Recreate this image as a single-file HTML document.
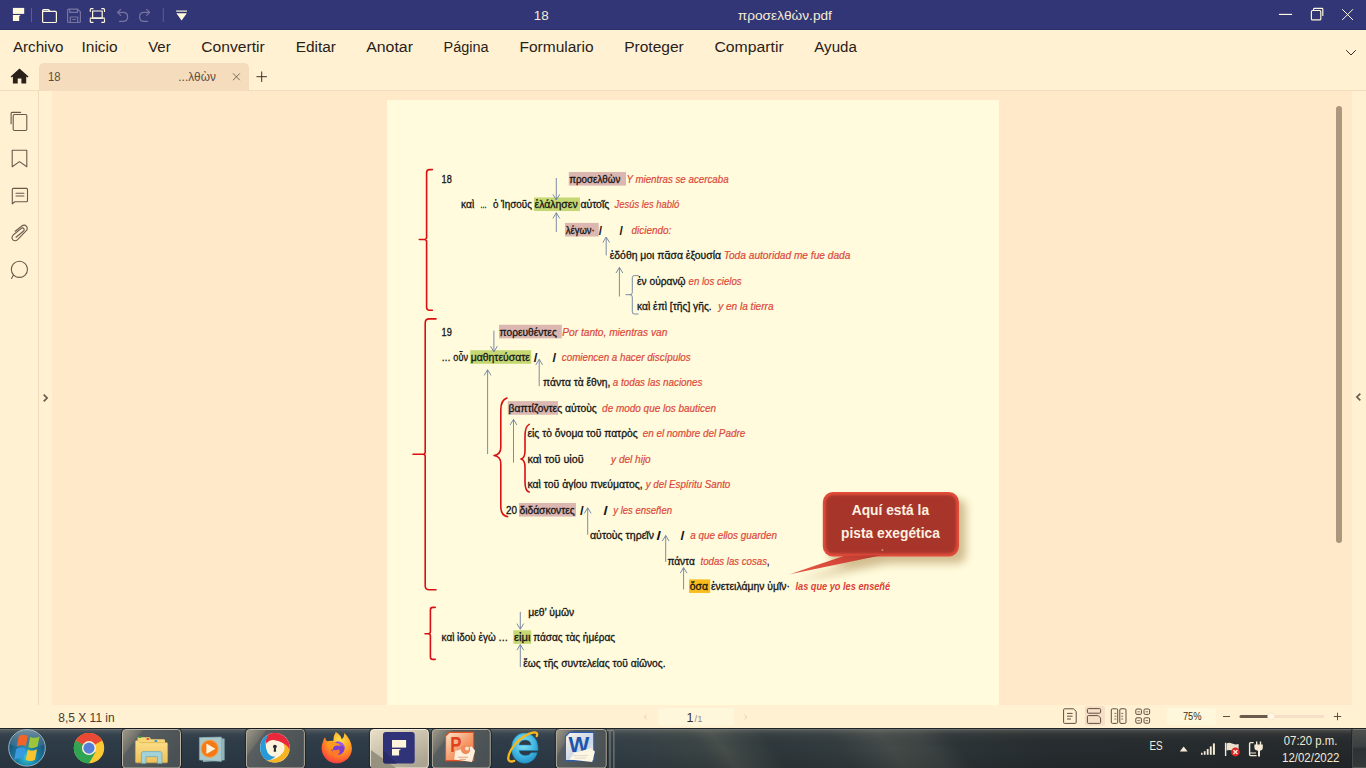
<!DOCTYPE html>
<html lang="es">
<head>
<meta charset="utf-8">
<title>προσελθὼν.pdf</title>
<style>
html,body{margin:0;padding:0;}
body{width:1366px;height:768px;overflow:hidden;position:relative;background:#fff1d2;font-family:"Liberation Sans",sans-serif;}
div{position:absolute;box-sizing:border-box;}
svg{position:absolute;left:0;top:0;overflow:visible;}
svg text{font-family:"Liberation Sans",sans-serif;}
#titlebar{left:0;top:0;width:1366px;height:30px;background:#333676;border-bottom:1px solid #2c2f6c;}
#menubar{left:0;top:30px;width:1366px;height:32px;background:#fff1d2;}
#tabbar{left:0;top:62px;width:1366px;height:29px;background:#fff1d2;border-bottom:1px solid #f4dcc0;}
#tab{left:39px;top:1px;width:210px;height:28px;background:#f5dcbc;border-radius:5px 5px 0 0;}
#sidebar{left:0;top:91px;width:39px;height:614px;background:#fff1d2;border-right:1px solid #f1d9bd;}
#gutter{left:39px;top:91px;width:13px;height:614px;background:#fff1d2;}
#viewport{left:52px;top:91px;width:1300px;height:614px;background:#ffe9c9;}
#page{left:335px;top:9px;width:612px;height:605px;background:#fffbdc;}
#rgutter{left:1352px;top:91px;width:14px;height:614px;background:#fff1d2;}
#vthumb{left:1336px;top:106px;width:6px;height:437px;background:#ab977e;border-radius:3px;}
#statusbar{left:0;top:705px;width:1366px;height:23px;background:#fff1d2;}
#taskbar{left:0;top:728px;width:1366px;height:40px;background:#2f3b44;}
.ui{fill:#2a2119;font-size:14.67px;}
.tt{fill:#f6edd2;font-size:13.6px;}
.tb{fill:#5c4c3e;font-size:12px;}
.st{fill:#4a3c30;font-size:12px;}
.k{fill:#161616;font-size:10px;stroke:#161616;stroke-width:0.3px;}
.r{fill:#dc4a3c;font-size:10px;font-style:italic;stroke:#dc4a3c;stroke-width:0.2px;}
.rb{fill:#dc4034;font-size:10px;font-style:italic;font-weight:bold;}
.sl{fill:#161616;font-size:13px;font-weight:bold;}
.co{fill:#fdf1e0;font-size:14.4px;font-weight:bold;}
.clk{fill:#f4ead6;font-size:12px;}
</style>
</head>
<body>
<div id="titlebar"></div>
<div id="menubar"></div>
<div id="tabbar"><div id="tab"></div></div>
<div id="sidebar"></div>
<div id="gutter"></div>
<div id="viewport"><div id="page"></div></div>
<div id="rgutter"></div>
<div id="vthumb"></div>
<div id="statusbar"></div>
<div id="taskbar"></div>
<svg class="chrome" width="1366" height="768" viewBox="0 0 1366 768">
<!-- title bar icons -->
<g fill="#fffadc">
<rect x="12.9" y="7.9" width="11.3" height="6"/>
<path d="M12.9 15.1H20.7L19.2 16.2V21.1H12.9Z"/>
</g>
<path d="M31.5 8V22M163.3 8V22" stroke="#5f5d8a" stroke-width="1"/>
<g fill="none" stroke="#fffadc" stroke-width="1.2" stroke-linejoin="round" stroke-linecap="round">
<path d="M42.6 11.4V10.6Q42.6 9.6 43.6 9.6H48Q48.8 9.6 49.3 10.4L49.9 11.4H55.4Q56.4 11.4 56.4 12.4V21.5Q56.4 22.5 55.4 22.5H43.6Q42.6 22.5 42.6 21.5V11.4H49.9"/>
<!-- scan -->
<path d="M90.3 11.5V9.7Q90.3 8.7 91.3 8.7H93M101.8 8.7H103.5Q104.5 8.7 104.5 9.7V11.5M104.5 19.5V21.4Q104.5 22.4 103.5 22.4H101.8M93 22.4H91.3Q90.3 22.4 90.3 21.4V19.5"/>
<rect x="92.6" y="11" width="9.6" height="7.2"/>
<path d="M90.3 18.2H104.5"/>
</g>
<g fill="none" stroke="#77759f" stroke-width="1.2" stroke-linejoin="round" stroke-linecap="round">
<!-- save -->
<path d="M67.6 10.2Q67.6 9.2 68.6 9.2H77.6L80.4 12V21.5Q80.4 22.5 79.4 22.5H68.6Q67.6 22.5 67.6 21.5Z"/>
<path d="M69.8 9.4V12.4H77.4V9.4M70.3 22.3V17H77.7V22.3M72.7 19.5H75.3"/>
<!-- undo -->
<path d="M117.6 12.3H123.2Q127.6 12.3 127.6 16.8Q127.6 21.4 123.2 21.4H119.6M120.6 9.3L117.6 12.3L120.6 15.3"/>
<!-- redo -->
<path d="M149.6 12.3H144Q139.6 12.3 139.6 16.8Q139.6 21.4 144 21.4H147.6M146.6 9.3L149.6 12.3L146.6 15.3"/>
</g>
<g fill="#fffadc"><rect x="176.2" y="10.5" width="10.8" height="1.2"/><path d="M176.4 13.3H186.8L181.6 20.6Z"/></g>
<text class="tt" x="533.7" y="19.9" textLength="14.9" lengthAdjust="spacingAndGlyphs">18</text>
<text class="tt" x="737.8" y="19.9" textLength="94.1" lengthAdjust="spacingAndGlyphs">προσελθὼν.pdf</text>
<g fill="none" stroke="#fffadc" stroke-width="1.15">
<path d="M1278.9 14.4H1292.1"/>
<rect x="1311.4" y="10.5" width="9.4" height="9.4" rx="1"/>
<path d="M1313.6 10.2V9.2Q1313.6 8.4 1314.4 8.4H1322Q1322.8 8.4 1322.8 9.2V16"/>
<path d="M1342.2 9.2L1353 20M1353 9.2L1342.2 20" stroke-width="1"/>
</g>
<!-- menu -->
<text class="ui" x="12.9" y="51.9" textLength="50.6" lengthAdjust="spacingAndGlyphs">Archivo</text>
<text class="ui" x="81.5" y="51.9" textLength="36.1" lengthAdjust="spacingAndGlyphs">Inicio</text>
<text class="ui" x="148.2" y="51.9" textLength="22.5" lengthAdjust="spacingAndGlyphs">Ver</text>
<text class="ui" x="201.3" y="51.9" textLength="63.5" lengthAdjust="spacingAndGlyphs">Convertir</text>
<text class="ui" x="295.7" y="51.9" textLength="40.3" lengthAdjust="spacingAndGlyphs">Editar</text>
<text class="ui" x="366.2" y="51.9" textLength="46.8" lengthAdjust="spacingAndGlyphs">Anotar</text>
<text class="ui" x="443.5" y="51.9" textLength="45.1" lengthAdjust="spacingAndGlyphs">Página</text>
<text class="ui" x="519.5" y="51.9" textLength="74.1" lengthAdjust="spacingAndGlyphs">Formulario</text>
<text class="ui" x="624.2" y="51.9" textLength="59.6" lengthAdjust="spacingAndGlyphs">Proteger</text>
<text class="ui" x="714.4" y="51.9" textLength="69.3" lengthAdjust="spacingAndGlyphs">Compartir</text>
<text class="ui" x="814.3" y="51.9" textLength="42.5" lengthAdjust="spacingAndGlyphs">Ayuda</text>
<path d="M1346.2 50.2L1351 55L1355.8 50.2" fill="none" stroke="#3a2f26" stroke-width="1"/>
<!-- tab bar -->
<path d="M10.6 76.6L19.5 68.4L28.5 76.6L27.6 77.6L26.2 76.4V83.6H21.4V78.6H17.7V83.6H12.9V76.4L11.5 77.6Z" fill="#2a211a"/>
<text class="tb" x="47.9" y="80.9" textLength="12.5" lengthAdjust="spacingAndGlyphs">18</text>
<text class="tb" x="178.3" y="80.9" textLength="37.6" lengthAdjust="spacingAndGlyphs">...λθὼν</text>
<path d="M233 73.4L239.8 80.2M239.8 73.4L233 80.2" stroke="#6a5a4c" stroke-width="0.9" fill="none"/>
<path d="M256.5 76.7H266.9M261.7 71.5V81.9" stroke="#3a2f26" stroke-width="1" fill="none"/>
<!-- sidebar icons -->
<g fill="none" stroke="#6b5a4c" stroke-width="1.1" stroke-linejoin="round" stroke-linecap="round">
<rect x="13.2" y="114.5" width="13.6" height="16" rx="1.2"/>
<path d="M11.1 123.8V113.4Q11.1 112.4 12.1 112.4H20.6"/>
<path d="M12.2 150.3H26.8V166.8L19.5 161.6L12.2 166.8Z"/>
<path d="M12.3 203.8V189.4Q12.3 188.4 13.3 188.4H26.5Q27.5 188.4 27.5 189.4V200.8Q27.5 201.8 26.5 201.8H14.9Z"/>
<path d="M16 193.2H23.9M16 196H23.9"/>
<path d="M15.2 231.2L21.6 226.2Q24.4 224 26.5 226.4Q28.4 229 25.8 231.2L17.6 239.6Q15.2 241.8 12.9 239.8Q10.8 237.4 13.4 234.8L21.4 228.4Q22.8 227.4 23.9 228.6Q24.8 230 23.6 231L16 237.2"/>
<circle cx="19.4" cy="269.3" r="8.1"/>
<path d="M13.4 275L11.6 278.4"/>
</g>
<path d="M43.7 394.6L47.1 398L43.7 401.4" fill="none" stroke="#6b5a4a" stroke-width="1.7"/>
<path d="M1360.3 393.6L1356.9 397L1360.3 400.4" fill="none" stroke="#6b5a4a" stroke-width="1.7"/>
<!-- status bar -->
<text class="st" x="58.3" y="721.6" textLength="56.4" lengthAdjust="spacingAndGlyphs">8,5 X 11 in</text>
<path d="M646.8 714.8L644.2 717L646.8 719.2M744.4 714.8L747 717L744.4 719.2" fill="none" stroke="#e6cfc0" stroke-width="1"/>
<rect x="658.3" y="708.2" width="75.7" height="17.5" rx="3" fill="#fff7dc"/>
<text x="686.6" y="721.8" font-size="12.5" fill="#3a2f26">1</text>
<text x="694.6" y="721.8" font-size="9.5" fill="#9a8c80">/1</text>
<rect x="1084.9" y="706" width="20" height="19.7" rx="2" fill="#f7dec6"/>
<g fill="none" stroke="#5e4e42" stroke-width="1" stroke-linejoin="round">
<path d="M1063.6 709.8Q1063.6 708.8 1064.6 708.8H1073.4L1076.2 711.4V722.4Q1076.2 723.4 1075.2 723.4H1064.6Q1063.6 723.4 1063.6 722.4Z"/>
<path d="M1067 713.4H1072.6M1067 716.2H1072.6M1067 719H1071"/>
<rect x="1087.4" y="708.6" width="13.2" height="4.6" rx="1"/>
<path d="M1087.4 716.6Q1087.4 715.6 1088.4 715.6H1098.2L1100.6 718V722.4Q1100.6 723.4 1099.6 723.4H1088.4Q1087.4 723.4 1087.4 722.4Z"/>
<rect x="1111.3" y="708.8" width="6.4" height="14.6" rx="1.2"/>
<rect x="1119.8" y="708.8" width="6.2" height="14.6" rx="1.2"/>
<path d="M1114.4 713.4H1116.4M1114.4 716.2H1116.4M1114.4 719H1116.4M1121.2 713.4H1123.2M1121.2 716.2H1123.2M1121.2 719H1123.2" stroke-width="0.8"/>
<rect x="1135.8" y="709" width="5.6" height="5.4" rx="1.2"/><rect x="1144" y="709" width="5.6" height="5.4" rx="1.2"/>
<rect x="1135.8" y="717.8" width="5.6" height="5.4" rx="1.2"/><rect x="1144" y="717.8" width="5.6" height="5.4" rx="1.2"/>
<path d="M1137.4 711.8H1139.8M1145.6 711.8H1148M1137.4 720.6H1139.8M1145.6 720.6H1148" stroke-width="0.8"/>
</g>
<rect x="1166.8" y="708" width="49.4" height="17" rx="3" fill="#fff7dc"/>
<text x="1182.9" y="720.2" font-size="11" fill="#3a2f26" textLength="18.6" lengthAdjust="spacingAndGlyphs">75%</text>
<path d="M1223 716.5H1230M1333.8 716.5H1341.2M1337.5 712.8V720.2" stroke="#5e4e42" stroke-width="1" fill="none"/>
<path d="M1241 716.5H1323" stroke="#f7dec6" stroke-width="3" stroke-linecap="round"/>
<path d="M1241 716.5H1268" stroke="#6b5a4c" stroke-width="3" stroke-linecap="round"/>
<circle cx="1271.2" cy="716.5" r="3.6" fill="#fff8e2" stroke="#f3dcc2" stroke-width="0.6"/>
</svg>

<svg class="task" width="1366" height="768" viewBox="0 0 1366 768">
<defs>
<linearGradient id="tbh" gradientUnits="userSpaceOnUse" x1="0" y1="0" x2="1366" y2="0" gradientTransform="translate(-561 0) skewX(36.87)"><stop offset="0.0000" stop-color="#2d3b47"/><stop offset="0.4100" stop-color="#2e3c48"/><stop offset="0.4685" stop-color="#343f45"/><stop offset="0.5124" stop-color="#3a4444"/><stop offset="0.5286" stop-color="#464d4a"/><stop offset="0.5454" stop-color="#3a4343"/><stop offset="0.5673" stop-color="#2e373b"/><stop offset="0.6149" stop-color="#323b3e"/><stop offset="0.6515" stop-color="#444a48"/><stop offset="0.6808" stop-color="#3b4241"/><stop offset="0.7028" stop-color="#2c3336"/><stop offset="0.7687" stop-color="#262c2f"/><stop offset="1.0000" stop-color="#25292c"/></linearGradient>
<linearGradient id="tbg" x1="0" y1="0" x2="0" y2="1"><stop offset="0" stop-color="#fff2d8" stop-opacity="0.22"/><stop offset="0.15" stop-color="#fff2d8" stop-opacity="0.05"/><stop offset="0.5" stop-color="#000" stop-opacity="0"/><stop offset="1" stop-color="#000" stop-opacity="0.12"/></linearGradient>
<linearGradient id="sdg" x1="0" y1="0" x2="0" y2="1"><stop offset="0" stop-color="#4c504e"/><stop offset="0.45" stop-color="#3a3f40"/><stop offset="0.5" stop-color="#2c3133"/><stop offset="1" stop-color="#34393a"/></linearGradient>
<linearGradient id="btn" x1="0" y1="0" x2="1" y2="0.5"><stop offset="0" stop-color="#a09a8a"/><stop offset="0.26" stop-color="#6f706a"/><stop offset="0.30" stop-color="#585e5f"/><stop offset="1" stop-color="#4a5154"/></linearGradient>
<linearGradient id="btna" x1="0" y1="0" x2="0.7" y2="1"><stop offset="0" stop-color="#eae0c8"/><stop offset="0.5" stop-color="#cac2ac"/><stop offset="1" stop-color="#aaa492"/></linearGradient>
<radialGradient id="orb" cx="0.5" cy="0.75" r="0.75"><stop offset="0" stop-color="#30d0e0"/><stop offset="0.4" stop-color="#1a7aa0"/><stop offset="0.8" stop-color="#1c4f74"/><stop offset="1" stop-color="#234a66"/></radialGradient>
<linearGradient id="orbhi" x1="0" y1="0" x2="0" y2="1"><stop offset="0" stop-color="#d8e4e0" stop-opacity="0.85"/><stop offset="1" stop-color="#7aa8b8" stop-opacity="0.25"/></linearGradient>
<radialGradient id="ffg" cx="0.6" cy="0.25" r="0.9"><stop offset="0" stop-color="#ffe14a"/><stop offset="0.45" stop-color="#ff9a1f"/><stop offset="0.8" stop-color="#ff4a3a"/><stop offset="1" stop-color="#e82e6a"/></radialGradient>
<radialGradient id="ieg" cx="0.45" cy="0.35" r="0.8"><stop offset="0" stop-color="#8ee6f4"/><stop offset="0.55" stop-color="#3db4e0"/><stop offset="1" stop-color="#1a80b8"/></radialGradient>
<linearGradient id="fold" x1="0" y1="0" x2="0" y2="1"><stop offset="0" stop-color="#fbe08a"/><stop offset="1" stop-color="#f0c058"/></linearGradient>
<linearGradient id="ppt" x1="0" y1="0" x2="1" y2="1"><stop offset="0" stop-color="#fde8d0"/><stop offset="0.5" stop-color="#f6a070"/><stop offset="1" stop-color="#ee6a3a"/></linearGradient>
<linearGradient id="wrd" x1="0" y1="0" x2="1" y2="1"><stop offset="0" stop-color="#fdf8e6"/><stop offset="0.6" stop-color="#c8d4e8"/><stop offset="1" stop-color="#fdf6e0"/></linearGradient>
</defs>
<rect x="0" y="728" width="1366" height="40" fill="url(#tbh)"/>
<rect x="0" y="728" width="1366" height="40" fill="url(#tbg)"/>
<rect x="0" y="728" width="1366" height="1" fill="#1e2428"/>
<rect x="0" y="729" width="1366" height="1" fill="#6e726e" opacity="0.8"/>
<!-- buttons -->
<g stroke="#b9b2a0" stroke-width="1">
<rect x="122.5" y="729.5" width="58" height="38.5" rx="3" fill="url(#btn)"/>
<rect x="246.4" y="729.5" width="58" height="38.5" rx="3" fill="url(#btn)"/>
<rect x="370.4" y="729.5" width="58" height="38.5" rx="3" fill="url(#btna)" stroke="#f4ecd6"/>
<path d="M370.9 750V768H396Z" fill="#96927f" stroke="none"/>
<rect x="432.3" y="729.5" width="58" height="38.5" rx="3" fill="url(#btn)"/>
<path d="M606 730.5H608.5Q610 730.5 610 732V768M610 730.5H612.4Q613.9 730.5 613.9 732V768" fill="none" stroke="#8a8a80"/>
<rect x="556.3" y="729.5" width="50" height="38.5" rx="3" fill="url(#btn)"/>
</g>
<g stroke="#14181c" stroke-width="1" fill="none" opacity="0.7">
<rect x="121.5" y="728.5" width="60" height="40.5" rx="4"/><rect x="245.4" y="728.5" width="60" height="40.5" rx="4"/><rect x="369.4" y="728.5" width="60" height="40.5" rx="4"/><rect x="431.3" y="728.5" width="60" height="40.5" rx="4"/><rect x="555.3" y="728.5" width="52" height="40.5" rx="4"/>
</g>
<!-- start orb -->
<circle cx="27" cy="747.8" r="18.3" fill="url(#orb)" stroke="#9ab4c0" stroke-width="1"/>
<path d="M9.8 744.5A17.4 17.4 0 0 1 44.2 744.5Q27 752 9.8 744.5Z" fill="url(#orbhi)" opacity="0.55"/>
<g transform="translate(27.8 747.9) scale(1.28) translate(-26.6 -747.8)">
<path d="M19.6 738.6Q23 736.6 26.6 738.4L25.2 746.4Q21.6 744.8 18 746.8Z" fill="#f0632a"/>
<path d="M28.4 739Q32 741 35.8 738.8L34.2 746.8Q30.6 749 27 747Z" fill="#9cc53c"/>
<path d="M17.6 748.6Q21.2 746.6 24.8 748.4L23.2 756.6Q19.8 754.8 16 757Z" fill="#3a9ae0"/>
<path d="M26.6 749Q30.2 751 33.8 748.8L32.2 757Q28.6 759 25 757Z" fill="#fcc42c"/>
</g>
<!-- chrome -->
<g transform="translate(89 748.1)">
<circle r="15.2" fill="#fbc934"/>
<path d="M0 0L-13.16 -7.6A15.2 15.2 0 0 1 13.16 -7.6Z" fill="#ea4a35"/>
<path d="M-13.16 -7.6A15.2 15.2 0 0 1 13.16 -7.6H0Z" fill="#ea4a35"/>
<path d="M-13.16 -7.6A15.2 15.2 0 0 0 0 15.2L6.58 3.8L-6.58 3.8Z" fill="#2fa452"/>
<path d="M-13.16 -7.6L-6.58 3.8L0 15.2A15.2 15.2 0 0 1 -13.16 -7.6Z" fill="#2fa452"/>
<path d="M-13.16 -7.6L0 0L-6.58 3.8Z" fill="#2fa452"/>
<path d="M-13.16 -7.6H6L0 0Z" fill="#ea4a35"/>
<circle r="7" fill="#fdf3dc"/><circle r="5.6" fill="#557fd8"/>
</g>
<!-- explorer -->
<g>
<path d="M137.6 737.2H149.6L151 739.2H163.6Q165 739.2 165 740.6V744H137.6Z" fill="#f7d878"/>
<path d="M140 742.6H166.4Q167.6 742.6 167.6 743.8V761.6Q167.6 762.8 166.4 762.8H136.6Q135.4 762.8 135.4 761.6V741.8Q135.4 740.6 136.6 740.6H138Z" fill="url(#fold)" stroke="#d8a840" stroke-width="0.6"/>
<rect x="138.6" y="736.4" width="2.6" height="1.6" fill="#28a83a"/><rect x="146.6" y="738.2" width="2.6" height="1.6" fill="#e03a2a"/><rect x="154.6" y="740.2" width="2.6" height="1.6" fill="#2a8ae0"/>
<path d="M141.4 763.4V753.6Q141.4 751.6 143.4 751.6H160Q162 751.6 162 753.6V763.4H157.4V756.6H146V763.4Z" fill="#9fd4e0" stroke="#5aa6be" stroke-width="0.7" opacity="0.95"/>
</g>
<!-- wmp -->
<g>
<path d="M203 737.4L224.6 738.4V760.2L203 762Z" fill="#8fb4bc"/>
<path d="M199.4 737.6L221.4 737V761.4L199.4 760Z" fill="#a9c8ca" stroke="#86a8b0" stroke-width="0.6"/>
<circle cx="209.7" cy="748.8" r="8.5" fill="#f57a16"/>
<circle cx="209.7" cy="748.8" r="8.5" fill="none" stroke="#fb9a3a" stroke-width="1"/>
<path d="M206.4 743.6L215.4 748.8L206.4 754Z" fill="#fdf2dc"/>
</g>
<!-- avast -->
<g transform="translate(274.9 747.8)">
<circle r="14.8" fill="#fdf3dc"/>
<path d="M-6.5 -13.3A14.8 14.8 0 0 1 14.6 2.4Q10 -6.4 -1 -7.8Q-6.4 -8 -8.6 -4Q-10 -9.6 -6.5 -13.3Z" fill="#e9283c"/>
<path d="M14.6 2.4A14.8 14.8 0 0 1 -8 12.4Q2 12.6 8.4 4.4Q11 0 8.2 -4.2Q13.4 -2.2 14.6 2.4Z" fill="#f7b322"/>
<path d="M-8 12.4A14.8 14.8 0 0 1 -6.5 -13.3Q-11.6 -5 -7.4 4.6Q-4.6 9 0.6 8.8Q-3 12.6 -8 12.4Z" fill="#279bd9"/>
<circle cx="0" cy="-1.2" r="1.9" fill="#2a2a2e"/><path d="M-0.9 -0.6H0.9L1.2 4H-1.2Z" fill="#2a2a2e"/>
</g>
<!-- firefox -->
<g transform="translate(336.8 748.6)">
<path d="M-1 -16.5Q4 -14 5 -9Q8 -12 7.4 -15.8Q14.6 -9 15.2 0A15.2 15.2 0 1 1 -14 -6.4Q-13.6 -9.6 -11.8 -11.4Q-11.4 -8.6 -9.6 -7.4Q-6.6 -8.4 -3.4 -7.6Q-3.6 -12.6 -1 -16.5Z" fill="url(#ffg)"/>
<circle cx="1" cy="-0.4" r="6.8" fill="#7b3fd4"/>
<path d="M1 -7.2A6.8 6.8 0 0 1 7.8 -0.4Q6 -4 1 -4.4Z" fill="#9a5af0"/>
<path d="M-10.6 -4.4Q-6.4 -8 -1.4 -6.4Q2.6 -5 4.6 -2Q1 -3.6 -2 -2.6Q-4.4 -1.2 -3.8 1.2Q-8 0.4 -10.6 -4.4Z" fill="#ff9a1c"/>
<path d="M-3.8 1.2Q-1 2.4 2.4 0.6Q4 4.4 0.4 6.6Q-4 7.4 -6.4 4Q-4.4 3.6 -3.8 1.2Z" fill="#ff7a28"/>
</g>
<!-- pdfelement -->
<g>
<rect x="383" y="731.9" width="31.7" height="31.7" rx="3" fill="#303378"/>
<path d="M383 750L396.6 763.6H386Q383 763.6 383 760.6Z" fill="#282b68"/>
<rect x="392" y="740" width="14.1" height="7.6" fill="#fff6dc"/>
<path d="M392 749H401L399.1 750.6V755.6H392Z" fill="#fff6dc"/>
</g>
<!-- powerpoint -->
<g>
<path d="M449.4 732.4H473.6V760.6H445.6V736.2Z" fill="url(#ppt)" stroke="#e8501e" stroke-width="1.1"/>
<text x="450.2" y="752.4" font-size="22" font-weight="bold" fill="#e2411a" textLength="11.2" lengthAdjust="spacingAndGlyphs">P</text>
<path d="M455 752.4L470.6 745.6L474.6 749.4L473 761H455Z" fill="#fdf0dc" transform="rotate(8 465 754)"/>
<circle cx="465.6" cy="749.6" r="4.6" fill="#f08a5a"/><circle cx="467" cy="748.6" r="2" fill="#fde0c8"/>
<path d="M458 757.2H468M459.6 759.4H466" stroke="#e89a78" stroke-width="0.9"/>
</g>
<!-- ie -->
<g transform="translate(524.5 747.7) scale(1.2)">
<path d="M-10.6 0A10.8 11.4 0 0 1 11 -1.6Q11.4 1 11.2 2.4H-4.6Q-3.8 6.6 1 6.6Q4 6.6 5.6 4.2H10.6A10.8 11.4 0 0 1 -10.6 0ZM-4.6 -2.2H5.6Q5 -6.4 0.6 -6.4Q-3.8 -6.4 -4.6 -2.2Z" fill="url(#ieg)" fill-rule="evenodd" stroke="#1c86c0" stroke-width="0.5"/>
<path d="M10.2 -9.6Q11.6 -13.2 7 -12.6Q0 -11.4 -7.6 -3.2Q-13.6 4 -13.6 9Q-13.2 12.6 -8.6 11" fill="none" stroke="#f9b81a" stroke-width="1.9" stroke-linecap="round"/>
</g>
<!-- word -->
<g>
<path d="M569.6 732.4H593.8V760.6H565.4V736.6Z" fill="url(#wrd)" stroke="#2a5cb0" stroke-width="1.1"/>
<text x="568.6" y="752.4" font-size="22" font-weight="bold" fill="#1f55aa" textLength="20.8" lengthAdjust="spacingAndGlyphs">W</text>
<path d="M574 754L590 747.6L594.6 750.4L593 761H570Z" fill="#fdf6e2" transform="rotate(6 584 754)"/>
<path d="M573 755.6H588M575 758H586" stroke="#d8d0c8" stroke-width="0.8"/>
</g>
<!-- tray -->
<text class="clk" x="1149.4" y="749.9" textLength="13.2" lengthAdjust="spacingAndGlyphs">ES</text>
<path d="M1179.8 751.6H1187.6L1183.7 746.6Z" fill="#f4ead6"/>
<g fill="#f4ead6"><rect x="1201" y="752.8" width="1.6" height="2"/><rect x="1203.8" y="751.2" width="1.8" height="3.6"/><rect x="1206.8" y="749" width="1.8" height="5.8"/><rect x="1209.8" y="746.4" width="1.9" height="8.4"/><rect x="1212.9" y="743.4" width="2" height="11.4"/></g>
<g>
<path d="M1225.6 742.8V756" stroke="#f4ead6" stroke-width="1.4"/>
<path d="M1226.6 743.4Q1229.4 742.2 1232 743.6Q1235 745 1238.6 744V751Q1235 752 1232 750.6Q1229.4 749.4 1226.6 750.6Z" fill="#f4ead6" opacity="0.95"/>
<circle cx="1235.4" cy="752" r="4.4" fill="#e02424"/>
<path d="M1233.4 750L1237.4 754M1237.4 750L1233.4 754" stroke="#fdf0e0" stroke-width="1.3"/>
</g>
<g fill="none" stroke="#f4ead6" stroke-width="1.4">
<path d="M1253.6 742.6H1250.6Q1249.6 742.6 1249.6 743.6V754.6Q1249.6 755.6 1250.6 755.6H1256.6"/>
<path d="M1250 753H1256" stroke-width="1"/>
</g>
<path d="M1254.4 744.4H1256V741.4H1257.4V744.4H1259.8V741.4H1261.2V744.4H1262.8V747.6Q1262.8 750.4 1260 750.8V756.4H1258V750.8Q1254.4 750.4 1254.4 747.6Z" fill="#f4ead6"/>
<text class="clk" x="1283.8" y="745.1" textLength="53.5" lengthAdjust="spacingAndGlyphs">07:20 p.m.</text>
<text class="clk" x="1282" y="761.7" textLength="57.4" lengthAdjust="spacingAndGlyphs">12/02/2022</text>
<rect x="1352.5" y="729.5" width="14" height="38.5" fill="url(#sdg)" stroke="#77776e" stroke-width="1"/>
<rect x="1351.5" y="728.5" width="1" height="40" fill="#181c20"/>
</svg>

<svg class="doc" width="1366" height="768" viewBox="0 0 1366 768">
<rect x="568.8" y="172.0" width="57.2" height="13.6" fill="#dcb6b0"/>
<rect x="534" y="197.46" width="46" height="13.6" fill="#c6d873"/>
<rect x="565" y="222.92" width="33.7" height="13.6" fill="#dcb6b0"/>
<rect x="499" y="324.76" width="62.8" height="13.6" fill="#dcb6b0"/>
<rect x="470.2" y="350.22" width="61.0" height="13.6" fill="#c6d873"/>
<rect x="507.8" y="401.14" width="50.2" height="13.6" fill="#dcb6b0"/>
<rect x="519" y="502.98" width="57" height="13.6" fill="#dcb6b0"/>
<rect x="689" y="579.36" width="21.2" height="13.6" fill="#fbbd1e"/>
<rect x="513.3" y="630.28" width="17.9" height="13.6" fill="#c6d873"/>
<path d="M556.3 178V200M552.9 194.4L556.3 200L559.6999999999999 194.4M556.3 232V212.8M552.9 218.4L556.3 212.8L559.6999999999999 218.4M606.2 255.4V237M602.8000000000001 242.6L606.2 237L609.6 242.6M619.4 296.5V267.4M616.0 273.0L619.4 267.4L622.8 273.0M493.9 330.7V351.8M490.5 346.2L493.9 351.8L497.29999999999995 346.2M539.2 386.2V359.3M535.8000000000001 364.90000000000003L539.2 359.3L542.6 364.90000000000003M487.6 454V369.8M484.20000000000005 375.40000000000003L487.6 369.8L491.0 375.40000000000003M513.5 462.7V419.4M510.1 425.0L513.5 419.4L516.9 425.0M587.7 534.7V507.8M584.3000000000001 513.4L587.7 507.8L591.1 513.4M665.7 562V535.5M662.3000000000001 541.1L665.7 535.5L669.1 541.1M683.6 589.5V567.6M680.2 573.2L683.6 567.6L687.0 573.2M520.3 611.8V629.2M516.9 623.6L520.3 629.2L523.6999999999999 623.6M520.3 667V644.6M516.9 650.2L520.3 644.6L523.6999999999999 650.2M638.6 275.6H634.3Q632.3 275.6 632.3 277.6V292.5Q632.3 294.7 630 294.7H625.6M630 294.7Q632.3 294.7 632.3 297V312Q632.3 314 634.3 314H638.6" fill="none" stroke="#6c7fa3" stroke-width="0.9"/>
<path d="M432.4 169.6H429.6Q426.6 169.6 426.6 172.6V237.5Q426.6 239.5 424.1 239.5H419.3M424.1 239.5Q426.6 239.5 426.6 241.5V307.2Q426.6 310.2 429.6 310.2H432.4M436 318.9H429.2Q425.2 318.9 425.2 322.9V452.2Q425.2 454.2 422.7 454.2H413M422.7 454.2Q425.2 454.2 425.2 456.2V585.8Q425.2 589.8 429.2 589.8H436M435.2 607.4H432.9Q430.4 607.4 430.4 609.9V631.7Q430.4 633.7 427.9 633.7H425M427.9 633.7Q430.4 633.7 430.4 635.7V656.9Q430.4 659.4 432.9 659.4H435.2M507 398Q500.8 400 500.8 410V447.5Q500.8 454.5 494 455.5Q500.8 456.5 500.8 463.5V506.6Q500.8 515.6 507.6 516.6M529.2 424.4Q525 426.4 525 436.4V451Q525 458 521 459Q525 460 525 467V482Q525 491 529.2 492" fill="none" stroke="#d81212" stroke-width="1.6" stroke-linecap="round" stroke-linejoin="round"/>
<text class="k" x="441.6" y="182.8" textLength="10.2" lengthAdjust="spacingAndGlyphs">18</text>
<text class="k" x="569.3" y="182.8" textLength="51.0" lengthAdjust="spacingAndGlyphs">προσελθὼν</text>
<text class="r" x="626.4" y="182.8" textLength="102.2" lengthAdjust="spacingAndGlyphs">Y mientras se acercaba</text>
<text class="k" x="461" y="208.26" textLength="13.2" lengthAdjust="spacingAndGlyphs">καὶ</text>
<text class="k" x="480.2" y="208.26" textLength="6.5" lengthAdjust="spacingAndGlyphs">…</text>
<text class="k" x="492.9" y="208.26" textLength="39.1" lengthAdjust="spacingAndGlyphs">ὁ Ἰησοῦς</text>
<text class="k" x="534.5" y="208.26" textLength="43.1" lengthAdjust="spacingAndGlyphs">ἐλάλησεν</text>
<text class="k" x="580.4" y="208.26" textLength="28.9" lengthAdjust="spacingAndGlyphs">αὐτοῖς</text>
<text class="r" x="614.6" y="208.26" textLength="64.7" lengthAdjust="spacingAndGlyphs">Jesús les habló</text>
<text class="k" x="565.8" y="233.72" textLength="28.9" lengthAdjust="spacingAndGlyphs">λέγων·</text>
<text class="sl" x="598.7" y="234.92" textLength="3.3" lengthAdjust="spacingAndGlyphs">/</text>
<text class="sl" x="619.6" y="234.92" textLength="3.4" lengthAdjust="spacingAndGlyphs">/</text>
<text class="r" x="631.5" y="233.72" textLength="39.8" lengthAdjust="spacingAndGlyphs">diciendo:</text>
<text class="k" x="609.7" y="259.18" textLength="111.3" lengthAdjust="spacingAndGlyphs">ἐδόθη μοι πᾶσα ἐξουσία</text>
<text class="r" x="723.7" y="259.18" textLength="126.7" lengthAdjust="spacingAndGlyphs">Toda autoridad me fue dada</text>
<text class="k" x="637" y="284.64" textLength="48.6" lengthAdjust="spacingAndGlyphs">ἐν οὐρανῷ</text>
<text class="r" x="688.6" y="284.64" textLength="53.0" lengthAdjust="spacingAndGlyphs">en los cielos</text>
<text class="k" x="637" y="310.1" textLength="74.7" lengthAdjust="spacingAndGlyphs">καὶ ἐπὶ [τῆς] γῆς.</text>
<text class="r" x="718.2" y="310.1" textLength="55.3" lengthAdjust="spacingAndGlyphs">y en la tierra</text>
<text class="k" x="441.6" y="335.56" textLength="10.2" lengthAdjust="spacingAndGlyphs">19</text>
<text class="k" x="499.6" y="335.56" textLength="57.2" lengthAdjust="spacingAndGlyphs">πορευθέντες</text>
<text class="r" x="562.3" y="335.56" textLength="105.0" lengthAdjust="spacingAndGlyphs">Por tanto, mientras van</text>
<text class="k" x="441.6" y="361.02" textLength="26.4" lengthAdjust="spacingAndGlyphs">… οὖν</text>
<text class="k" x="470.7" y="361.02" textLength="59.3" lengthAdjust="spacingAndGlyphs">μαθητεύσατε</text>
<text class="sl" x="533.7" y="362.22" textLength="3.7" lengthAdjust="spacingAndGlyphs">/</text>
<text class="sl" x="552.4" y="362.22" textLength="3.7" lengthAdjust="spacingAndGlyphs">/</text>
<text class="r" x="561.8" y="361.02" textLength="128.9" lengthAdjust="spacingAndGlyphs">comiencen a hacer discípulos</text>
<text class="k" x="543.1" y="386.48" textLength="67.2" lengthAdjust="spacingAndGlyphs">πάντα τὰ ἔθνη,</text>
<text class="r" x="612.8" y="386.48" textLength="89.6" lengthAdjust="spacingAndGlyphs">a todas las naciones</text>
<text class="k" x="508.6" y="411.94" textLength="88.1" lengthAdjust="spacingAndGlyphs">βαπτίζοντες αὐτοὺς</text>
<text class="r" x="602.1" y="411.94" textLength="114.0" lengthAdjust="spacingAndGlyphs">de modo que los bauticen</text>
<text class="k" x="527.5" y="437.4" textLength="110.2" lengthAdjust="spacingAndGlyphs">εἰς τὸ ὄνομα τοῦ πατρὸς</text>
<text class="r" x="642.7" y="437.4" textLength="102.5" lengthAdjust="spacingAndGlyphs">en el nombre del Padre</text>
<text class="k" x="527.5" y="462.86" textLength="56.2" lengthAdjust="spacingAndGlyphs">καὶ τοῦ υἱοῦ</text>
<text class="r" x="611.1" y="462.86" textLength="39.6" lengthAdjust="spacingAndGlyphs">y del hijo</text>
<text class="k" x="527.5" y="488.32" textLength="115.2" lengthAdjust="spacingAndGlyphs">καὶ τοῦ ἁγίου πνεύματος,</text>
<text class="r" x="645.7" y="488.32" textLength="84.6" lengthAdjust="spacingAndGlyphs">y del Espíritu Santo</text>
<text class="k" x="506" y="513.78" textLength="11" lengthAdjust="spacingAndGlyphs">20</text>
<text class="k" x="519.5" y="513.78" textLength="55.3" lengthAdjust="spacingAndGlyphs">διδάσκοντες</text>
<text class="sl" x="580" y="514.98" textLength="3.7" lengthAdjust="spacingAndGlyphs">/</text>
<text class="sl" x="603.6" y="514.98" textLength="4.3" lengthAdjust="spacingAndGlyphs">/</text>
<text class="r" x="613.3" y="513.78" textLength="58.7" lengthAdjust="spacingAndGlyphs">y les enseñen</text>
<text class="k" x="590" y="539.24" textLength="64" lengthAdjust="spacingAndGlyphs">αὐτοὺς τηρεῖν</text>
<text class="sl" x="656.4" y="540.44" textLength="4.5" lengthAdjust="spacingAndGlyphs">/</text>
<text class="sl" x="680.5" y="540.44" textLength="4.0" lengthAdjust="spacingAndGlyphs">/</text>
<text class="r" x="690.3" y="539.24" textLength="86.6" lengthAdjust="spacingAndGlyphs">a que ellos guarden</text>
<text class="k" x="667.4" y="564.7" textLength="27.4" lengthAdjust="spacingAndGlyphs">πάντα</text>
<text class="r" x="700.5" y="564.7" textLength="66.5" lengthAdjust="spacingAndGlyphs">todas las cosas</text>
<text class="k" x="767" y="564.7" textLength="2.4" lengthAdjust="spacingAndGlyphs">,</text>
<text class="k" x="689.8" y="590.16" textLength="100.2" lengthAdjust="spacingAndGlyphs">ὅσα ἐνετειλάμην ὑμῖν·</text>
<text class="rb" x="795.5" y="590.16" textLength="94.6" lengthAdjust="spacingAndGlyphs">las que yo les enseñé</text>
<text class="k" x="528.2" y="615.62" textLength="46.1" lengthAdjust="spacingAndGlyphs">μεθ’ ὑμῶν</text>
<text class="k" x="441.6" y="641.08" textLength="66.7" lengthAdjust="spacingAndGlyphs">καὶ ἰδοὺ ἐγὼ …</text>
<text class="k" x="514" y="641.08" textLength="16.5" lengthAdjust="spacingAndGlyphs">εἰμι</text>
<text class="k" x="533.2" y="641.08" textLength="81.9" lengthAdjust="spacingAndGlyphs">πάσας τὰς ἡμέρας</text>
<text class="k" x="523.2" y="666.54" textLength="142.4" lengthAdjust="spacingAndGlyphs">ἕως τῆς συντελείας τοῦ αἰῶνος.</text>
<defs>
<linearGradient id="tg" x1="1" y1="0" x2="0" y2="1"><stop offset="0" stop-color="#b23a2c"/><stop offset="0.45" stop-color="#d8483a"/><stop offset="1" stop-color="#e85a48"/></linearGradient>
<filter id="sh" x="-20%" y="-30%" width="150%" height="180%"><feGaussianBlur in="SourceAlpha" stdDeviation="4.2"/><feOffset dx="7" dy="7"/><feColorMatrix type="matrix" values="0 0 0 0 0.47  0 0 0 0 0.31  0 0 0 0 0.12  0 0 0 0.62 0"/></filter>
<filter id="bl" x="-10%" y="-10%" width="120%" height="120%"><feGaussianBlur stdDeviation="1.3"/></filter>
<clipPath id="cc"><rect x="822.8" y="492" width="136.2" height="64.4" rx="10"/></clipPath>
</defs>
<path filter="url(#sh)" d="M832.8 492H949Q959 492 959 502V546.4Q959 556.4 949 556.4H881.5L789.8 574.2L844.5 556.4H832.8Q822.8 556.4 822.8 546.4V502Q822.8 492 832.8 492Z" fill="#000"/>
<rect x="822.8" y="492" width="136.2" height="64.4" rx="10" fill="#e24c3b"/>
<g clip-path="url(#cc)"><rect x="825.6" y="495" width="130.6" height="58.6" rx="8" fill="#a8352b" filter="url(#bl)"/></g>
<path d="M881.5 555.2L789.8 574.2L844.5 555.8Z" fill="url(#tg)"/>
<text class="co" x="890.4" y="514.8" text-anchor="middle" textLength="77.3" lengthAdjust="spacingAndGlyphs">Aquí está la</text>
<text class="co" x="890.4" y="537.6" text-anchor="middle" textLength="98.8" lengthAdjust="spacingAndGlyphs">pista exegética</text>
<rect x="881.6" y="549.6" width="1.6" height="0.9" fill="#f6e6d6"/>
</svg>
</body>
</html>
